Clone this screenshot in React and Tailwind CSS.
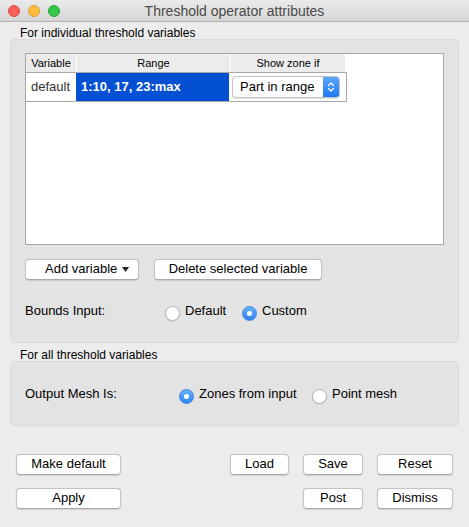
import React from "react";

function Btn({ children, className = "" }) {
  return (
    <div
      className={
        "h-[21px] flex items-center justify-center pb-[2px] rounded-[4px] bg-white border border-[#c3c3c3] border-b-[#a9a9a9] shadow-[0_0.5px_1px_rgba(0,0,0,0.12)] text-[13px] leading-none text-black " +
        className
      }
    >
      {children}
    </div>
  );
}

function Radio({ checked }) {
  if (checked) {
    return (
      <div className="w-[15px] h-[15px] rounded-full bg-gradient-to-b from-[#69b1fa] to-[#2d82f0] border border-[#3c86e6] flex items-center justify-center shrink-0">
        <div className="w-[5px] h-[5px] rounded-full bg-white" />
      </div>
    );
  }
  return (
    <div className="w-[15px] h-[15px] rounded-full bg-white border border-[#b5b5b5] shadow-[0_0.5px_1px_rgba(0,0,0,0.15)] shrink-0" />
  );
}

export default function App() {
  return (
    <div
      className="w-[469px] h-[527px] bg-[#ececec] overflow-hidden text-black"
      style={{ fontFamily: '"Liberation Sans", Arial, sans-serif' }}
    >
      {/* Title bar */}
      <div className="relative h-[22px] bg-gradient-to-b from-[#ebebeb] to-[#d5d5d5] border-b border-[#b3b3b3] flex items-center justify-center">
        <div className="absolute left-[8px] top-[5px] flex gap-[8px]">
          <div className="w-[12px] h-[12px] rounded-full bg-[#fc605c] border border-[#de4a43]" />
          <div className="w-[12px] h-[12px] rounded-full bg-[#fdbc40] border border-[#dea236]" />
          <div className="w-[12px] h-[12px] rounded-full bg-[#34c84a] border border-[#27a83a]" />
        </div>
        <div className="text-[14px] text-[#4a4a4a] leading-none">Threshold operator attributes</div>
      </div>

      <div className="px-[10px]">
        {/* Group 1 label */}
        <div className="mt-[5px] h-[12px] leading-[12px] text-[12px] pl-[10px]">For individual threshold variables</div>

        {/* Group 1 box */}
        <div className="h-[304px] rounded-[4px] bg-[#e3e3e3] border border-[#dadada] pl-[14px] pt-[13px]">
          {/* Table */}
          <div className="w-[419px] h-[192px] border border-[#a8a8a8] bg-white">
            <div className="flex h-[18px] text-[11px] leading-[18px]">
              <div className="w-[51px] bg-[#ececec] text-center border-r border-white">Variable</div>
              <div className="w-[153px] bg-[#ececec] text-center">Range</div>
              <div className="w-[115px] bg-[#ececec] text-center border-l border-white">Show zone if</div>
              <div className="flex-1 bg-white" />
            </div>
            <div className="flex w-[321px] h-[30px] border-t border-b border-r border-[#a8a8a8] text-[13px]">
              <div className="w-[51px] flex items-center pl-[5px] text-[#333] border-l border-[#a8a8a8] -ml-px">default</div>
              <div className="w-[153px] bg-[#0351d2] text-white font-bold flex items-center pl-[5px]">1:10, 17, 23:max</div>
              <div className="flex-1 flex items-center pl-[3px]">
                <div className="w-[108px] h-[22px] flex rounded-[4px] bg-white border border-[#c3c3c3] shadow-[0_0.5px_1px_rgba(0,0,0,0.12)] overflow-hidden">
                  <div className="flex-1 flex items-center pl-[7px] text-[13px]">Part in range</div>
                  <div className="w-[16px] bg-gradient-to-b from-[#5aa8fa] to-[#1e78f0] flex items-center justify-center">
                    <svg width="8" height="12" viewBox="0 0 8 12" fill="none" stroke="white" strokeWidth="1.3" strokeLinecap="round" strokeLinejoin="round">
                      <path d="M1.5 4.5 L4 2 L6.5 4.5" />
                      <path d="M1.5 7.5 L4 10 L6.5 7.5" />
                    </svg>
                  </div>
                </div>
              </div>
            </div>
          </div>

          {/* Buttons */}
          <div className="flex mt-[14px] gap-[15px]">
            <Btn className="w-[114px] justify-start pl-[19px]">
              <span>Add variable</span>
              <svg className="ml-[5px] mt-[2px]" width="7" height="5" viewBox="0 0 7 5">
                <path d="M0 0 L7 0 L3.5 5 Z" fill="#222" />
              </svg>
            </Btn>
            <Btn className="w-[168px]">Delete selected variable</Btn>
          </div>

          {/* Bounds input */}
          <div className="flex items-center mt-[25px] h-[16px] text-[13px]">
            <div className="w-[140px] -mt-[4px]">Bounds Input:</div>
            <div className="w-[77px] flex items-center gap-[5px]">
              <Radio />
              <span className="-mt-[4px]">Default</span>
            </div>
            <div className="flex items-center gap-[5px]">
              <Radio checked />
              <span className="-mt-[4px]">Custom</span>
            </div>
          </div>
        </div>

        {/* Group 2 label */}
        <div className="mt-[6px] h-[12px] leading-[12px] text-[12px] pl-[10px]">For all threshold variables</div>

        {/* Group 2 box */}
        <div className="h-[65px] rounded-[4px] bg-[#e3e3e3] border border-[#dadada] pl-[14px] pt-[26px]">
          <div className="flex items-center h-[16px] text-[13px]">
            <div className="w-[154px] -mt-[4px]">Output Mesh Is:</div>
            <div className="w-[133px] flex items-center gap-[5px]">
              <Radio checked />
              <span className="-mt-[4px]">Zones from input</span>
            </div>
            <div className="flex items-center gap-[5px]">
              <Radio />
              <span className="-mt-[4px]">Point mesh</span>
            </div>
          </div>
        </div>
      </div>

      {/* Bottom buttons */}
      <div className="px-[16px] mt-[28px] flex flex-col gap-[13px]">
        <div className="flex">
          <Btn className="w-[105px]">Make default</Btn>
          <div className="flex-1" />
          <Btn className="w-[59px]">Load</Btn>
          <Btn className="w-[60px] ml-[14px]">Save</Btn>
          <Btn className="w-[76px] ml-[14px]">Reset</Btn>
        </div>
        <div className="flex">
          <Btn className="w-[105px]">Apply</Btn>
          <div className="flex-1" />
          <Btn className="w-[60px]">Post</Btn>
          <Btn className="w-[76px] ml-[14px]">Dismiss</Btn>
        </div>
      </div>
    </div>
  );
}
